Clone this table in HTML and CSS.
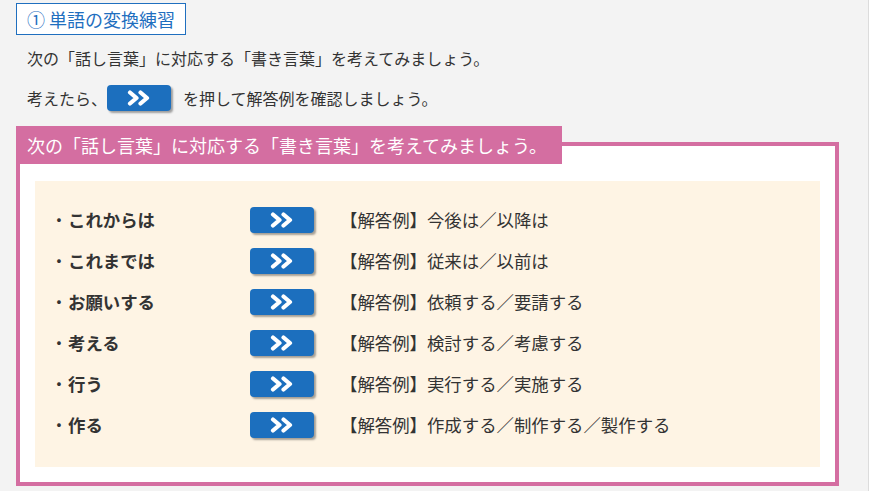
FILE: index.html
```html
<!DOCTYPE html>
<html lang="ja">
<head>
  <meta charset="UTF-8" />
  <meta name="viewport" content="width=device-width, initial-scale=1.0"/>
  <title>単語の変換練習</title>
  <link rel="stylesheet" href="styles.css">
</head>
<body>
  <div class="page">
    <h2 class="title">① 単語の変換練習</h2>
    <p class="lead">次の「話し言葉」に対応する「書き言葉」を考えてみましょう。</p>
    <p class="lead lead-btn">考えたら、<span class="next-btn"><svg viewBox="0 0 24 16" width="24" height="16"><polyline points="3,2.5 9.5,8 3,13.5" /><polyline points="13.5,2.5 20,8 13.5,13.5" /></svg></span>を押して解答例を確認しましょう。</p>

    <section class="practice">
      <h3 class="practice-head">次の「話し言葉」に対応する「書き言葉」を考えてみましょう。</h3>
      <div class="answers">
        <div class="row">
          <span class="word">これからは</span>
          <button class="next-btn"><svg viewBox="0 0 24 16" width="24" height="16"><polyline points="3,2.5 9.5,8 3,13.5" /><polyline points="13.5,2.5 20,8 13.5,13.5" /></svg></button>
          <span class="answer">【解答例】今後は／以降は</span>
        </div>
        <div class="row">
          <span class="word">これまでは</span>
          <button class="next-btn"><svg viewBox="0 0 24 16" width="24" height="16"><polyline points="3,2.5 9.5,8 3,13.5" /><polyline points="13.5,2.5 20,8 13.5,13.5" /></svg></button>
          <span class="answer">【解答例】従来は／以前は</span>
        </div>
        <div class="row">
          <span class="word">お願いする</span>
          <button class="next-btn"><svg viewBox="0 0 24 16" width="24" height="16"><polyline points="3,2.5 9.5,8 3,13.5" /><polyline points="13.5,2.5 20,8 13.5,13.5" /></svg></button>
          <span class="answer">【解答例】依頼する／要請する</span>
        </div>
        <div class="row">
          <span class="word">考える</span>
          <button class="next-btn"><svg viewBox="0 0 24 16" width="24" height="16"><polyline points="3,2.5 9.5,8 3,13.5" /><polyline points="13.5,2.5 20,8 13.5,13.5" /></svg></button>
          <span class="answer">【解答例】検討する／考慮する</span>
        </div>
        <div class="row">
          <span class="word">行う</span>
          <button class="next-btn"><svg viewBox="0 0 24 16" width="24" height="16"><polyline points="3,2.5 9.5,8 3,13.5" /><polyline points="13.5,2.5 20,8 13.5,13.5" /></svg></button>
          <span class="answer">【解答例】実行する／実施する</span>
        </div>
        <div class="row">
          <span class="word">作る</span>
          <button class="next-btn"><svg viewBox="0 0 24 16" width="24" height="16"><polyline points="3,2.5 9.5,8 3,13.5" /><polyline points="13.5,2.5 20,8 13.5,13.5" /></svg></button>
          <span class="answer">【解答例】作成する／制作する／製作する</span>
        </div>
      </div>
    </section>
  </div>
</body>
</html>
```

FILE: styles.css
```css
* { box-sizing: border-box; }
body { margin: 0; background: #f3f3f3; font-family: "Noto Sans CJK JP", "Noto Sans", sans-serif; color: #333; }
.page { width: 869px; min-height: 491px; padding: 3px 30px 0 16px; border-right: 1px solid #dcdcdc; }

.title { display: inline-block; margin: 0; padding: 0 10px; height: 32px; line-height: 30px; font-size: 18px; font-weight: normal; color: #1f6fbf; background: #fff; border: 1px solid #1f6fbf; }

.lead { margin: 11px 0 0 11px; font-size: 16px; line-height: 24px; }
.lead-btn { margin-top: 14px; display: flex; align-items: center; height: 28px; }
.lead-btn .next-btn { margin-right: 12px; }

.next-btn { display: inline-flex; align-items: center; justify-content: center; width: 64px; height: 26px; padding: 0; border: none; border-radius: 4px; background: #1c6fbe; box-shadow: 2px 2px 2px rgba(0,0,0,0.35); }
.next-btn svg { fill: none; stroke: #fff; stroke-width: 4.2; stroke-linecap: round; stroke-linejoin: round; }

.practice { margin-top: 30px; width: 823px; border: 4px solid #d46ea1; background: #fff; padding: 0 15px 15px; }
.practice-head { width: fit-content; margin: -20px 0 0 -19px; padding: 0 15px 0 11px; height: 38px; line-height: 38px; font-size: 18px; font-weight: normal; color: #fff; background: #d46ea1; }

.answers { margin-top: 17px; background: #fef4e4; padding: 18px 0 22px 15px; }
.row { display: grid; grid-template-columns: 200px 64px auto; align-items: center; height: 41px; font-size: 17.4px; }
.word { font-weight: bold; }
.word::before { content: "・"; display: inline-block; width: 18px; text-align: center; font-weight: normal; }
.answer { margin-left: 26px; }
```
